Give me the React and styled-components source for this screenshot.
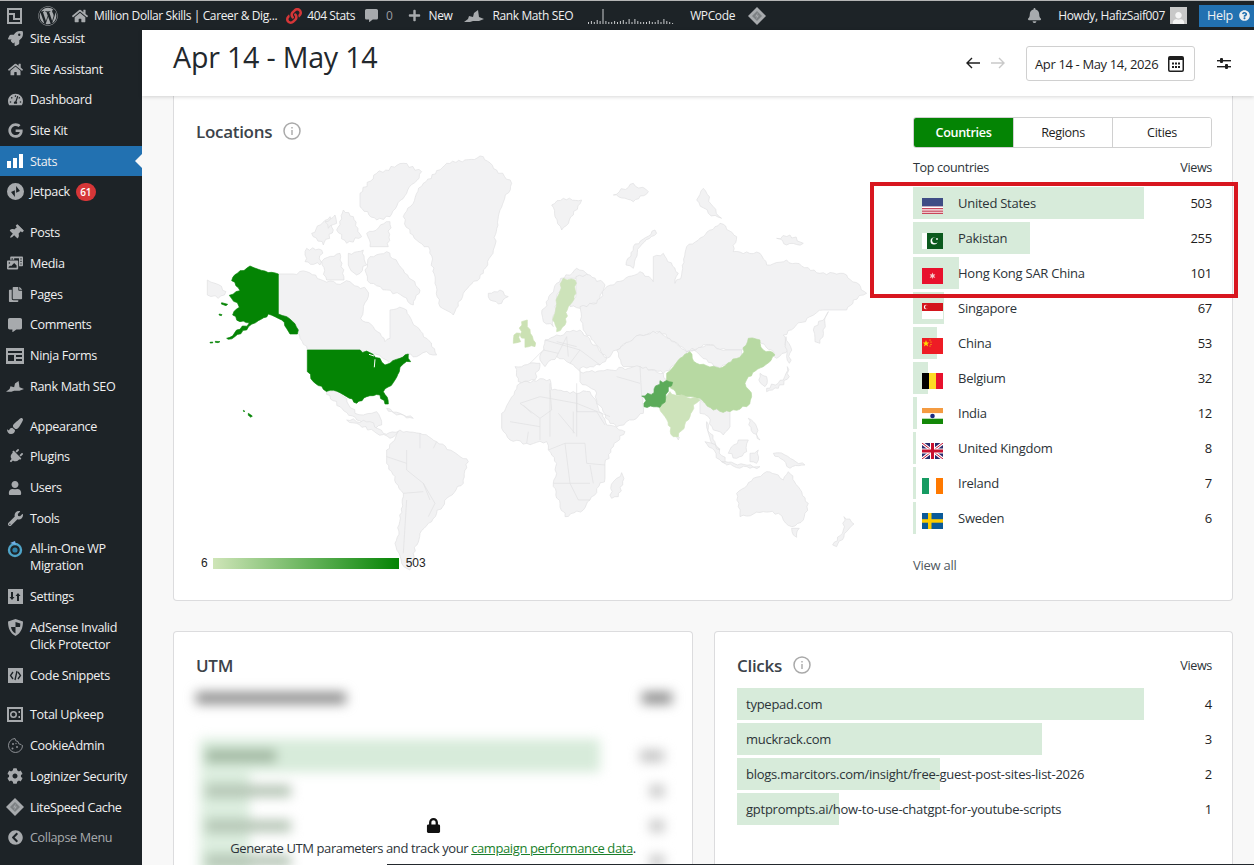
import React from 'react';
import styled, { createGlobalStyle } from 'styled-components';
import {
  FaRocket, FaHome, FaTachometerAlt, FaGoogle, FaThumbtack, FaPhotoVideo, FaCopy, FaCommentAlt,
  FaPaintBrush, FaPlug, FaUser, FaWrench, FaCog, FaLock, FaLink, FaPlus, FaBell,
  FaWordpress, FaChevronCircleLeft, FaQuestionCircle,
} from 'react-icons/fa';

const UI = '"Open Sans", "Noto Sans", sans-serif';
const GREEN = '#048404';
const BAR = '#d7ebda';

const GlobalStyle = createGlobalStyle`
  html, body { margin: 0; padding: 0; height: 100%; overflow: hidden; background: #f8f8f8; }
  body { font-family: ${UI}; font-size: 13px; color: #2c3338; letter-spacing: -0.35px; }
  * { box-sizing: border-box; }
`;

const Page = styled.div`
  position: relative;
  width: 1254px;
  height: 865px;
  overflow: hidden;
  display: flex;
  flex-direction: column;
`;

/* admin bar */
const TopBar = styled.header`
  height: 30px;
  flex: none;
  background: #1d2327;
  border-top: 1px solid #b5b5b5;
  color: #f0f0f1;
  display: flex;
  align-items: center;
  white-space: nowrap;
`;
const BarItem = styled.span`
  display: flex;
  align-items: center;
  margin-left: ${({ $ml }) => $ml || 0}px;
  color: ${({ $muted }) => ($muted ? '#9a9ea2' : 'inherit')};
  font-size: 12px;
  letter-spacing: -0.38px;
  svg { display: block; color: ${({ $tint }) => $tint || '#a7aaad'}; }
`;
const BarSpacer = styled.div`
  flex: 1;
`;
const HelpTab = styled.span`
  margin-left: 12px;
  width: 55px;
  height: 22px;
  background: #2271b1;
  display: flex;
  align-items: center;
  gap: 6px;
  padding-left: 8px;
  font-size: 12.6px;
`;
const Avatar = styled.span`
  width: 17px;
  height: 17px;
  margin-left: 5px;
  background: #c8c8c8;
  display: flex;
  align-items: flex-end;
  justify-content: center;
  overflow: hidden;
  svg { color: #f4f4f4; margin-bottom: -1px; }
`;

const Body = styled.div`
  flex: 1;
  display: flex;
  min-height: 0;
`;

/* side menu */
const Side = styled.nav`
  width: 142px;
  flex: none;
  background: #1d2327;
  overflow: hidden;
`;
const SideList = styled.div`
  margin-top: -7px;
`;
const SideItem = styled.div`
  position: relative;
  display: flex;
  align-items: flex-start;
  padding: 6.85px 0 6.85px 6px;
  margin-top: ${({ $sep }) => ($sep ? '9.3px' : '0')};
  background: ${({ $active }) => ($active ? '#2271b1' : 'transparent')};
  color: ${({ $dim }) => ($dim ? '#a7aaad' : '#f0f0f1')};
  font-size: 12.6px;
  line-height: 17px;
  ${({ $active }) => $active && `
    &::after {
      content: '';
      position: absolute;
      right: 0;
      top: 50%;
      margin-top: -7px;
      border: 7px solid transparent;
      border-right-color: #f8f8f8;
      border-left-width: 0;
    }
  `}
`;
const SideIcon = styled.span`
  width: 18px;
  height: 17px;
  flex: none;
  margin-right: 6px;
  display: flex;
  align-items: center;
  justify-content: center;
  color: ${({ $active }) => ($active ? '#fff' : '#a7aaad')};
`;
const Tilted = styled.span`
  display: flex;
  transform: rotate(45deg);
`;
const Badge = styled.span`
  display: inline-block;
  margin-left: 6px;
  min-width: 20px;
  height: 18px;
  line-height: 18px;
  border-radius: 9px;
  background: #d63638;
  color: #fff;
  font-size: 10px;
  font-weight: 600;
  text-align: center;
  letter-spacing: 0;
`;

const Main = styled.main`
  flex: 1;
  min-width: 0;
  display: flex;
  flex-direction: column;
`;

const DateHeader = styled.div`
  height: 66px;
  flex: none;
  background: #fff;
  box-shadow: 0 1px 4px rgba(0, 0, 0, 0.16);
  position: relative;
  z-index: 2;
  display: flex;
  align-items: center;
  padding: 0 23px 0 31px;
`;
const PageTitle = styled.h1`
  margin: 0 auto 13px 0;
  font-size: 28.6px;
  font-weight: 400;
  letter-spacing: -0.2px;
  color: #23282d;
`;
const DateBox = styled.div`
  width: 169px;
  height: 35px;
  margin: 1px 22px 0 21px;
  border: 1px solid #d0d0d0;
  border-radius: 3px;
  display: flex;
  align-items: center;
  justify-content: space-between;
  padding: 0 10px 0 8px;
  font-size: 13px;
  letter-spacing: -0.36px;
  color: #1e1e1e;
`;
const IconButton = styled.span`
  display: flex;
  margin-left: ${({ $ml }) => $ml || 0}px;
  color: ${({ $off }) => ($off ? '#c9c9c9' : '#1e1e1e')};
`;

const Content = styled.div`
  flex: 1;
  min-height: 0;
  padding: 0 21px 0 31px;
  background: #f8f8f8;
`;
const Card = styled.section`
  background: #fff;
  border: 1px solid #dcdcde;
  border-radius: 4px;
`;
const LocationsCard = styled(Card)`
  height: 505px;
  border-top: 0;
  border-radius: 0 0 4px 4px;
  padding: 20px 20px 0 22px;
  display: grid;
  grid-template-columns: 1fr 299px;
`;
const MapColumn = styled.div`
  min-width: 0;
`;
const CardTitle = styled.h2`
  margin: 0;
  display: flex;
  align-items: center;
  gap: 11px;
  height: 30px;
  font-size: 17px;
  font-weight: 600;
  letter-spacing: -0.3px;
  color: #3c434a;
`;
const MapArea = styled.div`
  position: relative;
  width: 717px;
  height: 420px;
  margin-top: 4px;
  svg { display: block; overflow: visible; }
`;
const Legend = styled.div`
  position: absolute;
  left: 5px;
  top: 406px;
  display: flex;
  align-items: center;
  font-family: "Liberation Sans", Arial, sans-serif;
  font-size: 12px;
  letter-spacing: 0;
  color: #222;
`;
const LegendBar = styled.span`
  width: 186px;
  height: 11px;
  margin: 0 7px 0 5px;
  background: linear-gradient(90deg, #cfe5b8, ${GREEN});
`;

const Tabs = styled.div`
  display: grid;
  grid-template-columns: 99px 99px 99px;
  height: 31px;
  margin-top: 1px;
  border: 1px solid #d0d0d0;
  border-radius: 3px;
  overflow: hidden;
`;
const Tab = styled.span`
  display: flex;
  align-items: center;
  justify-content: center;
  background: ${({ $on }) => ($on ? GREEN : '#fff')};
  color: ${({ $on }) => ($on ? '#fff' : '#1e1e1e')};
  font-weight: ${({ $on }) => ($on ? 600 : 400)};
  font-size: 12.6px;
  & + & { border-left: 1px solid #d0d0d0; }
`;
const ListHead = styled.div`
  display: flex;
  justify-content: space-between;
  align-items: center;
  height: ${({ $tall }) => ($tall ? '30px' : '18px')};
  margin: ${({ $tall }) => ($tall ? '0 0 8px' : '10px 0 10.5px')};
  font-size: 12.6px;
  color: #2c3338;
`;
const Rows = styled.div`
  display: flex;
  flex-direction: column;
  gap: 2.1px;
`;
const Row = styled.div`
  position: relative;
  height: 33px;
  display: flex;
  align-items: center;
  padding-left: 9px;
  font-size: 13px;
  letter-spacing: -0.25px;
  color: #2c3338;
  &::before {
    content: '';
    position: absolute;
    left: 0;
    top: 0;
    bottom: 1px;
    width: ${({ $w }) => $w}px;
    background: ${BAR};
  }
`;
const RowLabel = styled.span`
  position: relative;
  display: flex;
  align-items: center;
  gap: 15px;
  flex: 1;
  margin-top: -1px;
  white-space: nowrap;
  svg { display: block; margin-top: 6px; }
`;
const RowValue = styled.span`
  position: relative;
  margin-top: -1px;
  color: #1e1e1e;
`;
const ViewAll = styled.div`
  margin-top: 22px;
  line-height: 17px;
  font-size: 13px;
  letter-spacing: -0.25px;
  color: #50575e;
`;

const Split = styled.div`
  display: grid;
  grid-template-columns: 520px 519px;
  gap: 21px;
  margin-top: 30px;
`;
const LowerCard = styled(Card)`
  position: relative;
  height: 280px;
  padding: 18px 20px 0 22px;
  border-bottom: 0;
`;
const Blurred = styled.div`
  filter: blur(6px);
  padding-top: 9px;
`;
const GhostHead = styled.div`
  display: flex;
  justify-content: space-between;
  align-items: center;
  height: 18px;
  margin-bottom: 31px;
`;
const Ghost = styled.span`
  display: block;
  width: ${({ $w }) => $w}px;
  height: 12px;
  background: ${({ $c }) => $c || '#8d8d8d'};
`;
const GhostRow = styled.div`
  position: relative;
  display: flex;
  align-items: center;
  justify-content: space-between;
  height: 35px;
  padding: 0 8px 0 10px;
  &::before {
    content: '';
    position: absolute;
    left: 4px;
    top: 1px;
    bottom: 1px;
    width: ${({ $w }) => $w}px;
    background: ${BAR};
  }
  span { position: relative; }
`;
const LockNote = styled.div`
  position: absolute;
  left: 0;
  right: 0;
  top: 186px;
  display: flex;
  flex-direction: column;
  align-items: center;
  gap: 6px;
  font-size: 13px;
  letter-spacing: -0.4px;
  color: #2c3338;
  svg { color: #111; }
  a { color: #1a7f2b; text-decoration: underline; }
`;

const Callout = styled.div`
  position: absolute;
  left: 870px;
  top: 182px;
  width: 368px;
  height: 116px;
  border: 4px solid #d8161f;
  pointer-events: none;
`;
const BottomEdge = styled.div`
  position: absolute;
  left: 387px;
  right: 0;
  bottom: 0;
  height: 1px;
  background: #23282d;
`;

const StatsIcon = () => (
  <svg width="16" height="16" viewBox="0 0 16 16" fill="currentColor">
    <rect x="0" y="8" width="4" height="7" /><rect x="6" y="5" width="4" height="10" /><rect x="12" y="1" width="4" height="14" />
  </svg>
);
const JetpackIcon = () => (
  <svg width="17" height="17" viewBox="0 0 16 16" fill="currentColor">
    <path fillRule="evenodd" d="M8 0a8 8 0 1 1 0 16A8 8 0 0 1 8 0zM8.6 2.8v6.4l3.6-1.6zM7.4 13.2V6.8L3.8 8.4z" />
  </svg>
);
const RankIcon = ({ size = 20 }) => (
  <svg width={size} height={size * 0.7} viewBox="0 0 20 14" fill="currentColor">
    <path d="M0 13l4-3 1-3 4 1 1-4 4-3 1 7 5 2-5 2-6 0-3 1z" />
  </svg>
);
const NinjaIcon = () => (
  <svg width="18" height="16" viewBox="0 0 18 16" fill="currentColor">
    <path fillRule="evenodd" d="M0 0h18v16H0zM2 3v2h14V3zM2 7v6h6V7zM10 7v2h6V7zM10 11v2h6v-2z" />
  </svg>
);
const MigrationIcon = () => (
  <svg width="18" height="18" viewBox="0 0 18 18" fill="none">
    <circle cx="9" cy="10" r="6" stroke="#4fa3c7" strokeWidth="2.4" />
    <circle cx="9" cy="10" r="2.6" fill="#2f7fa6" />
    <path d="M4 3l5-2 1 4z" fill="#72aee6" />
  </svg>
);
const SettingsIcon = () => (
  <svg width="15" height="15" viewBox="0 0 15 15" fill="currentColor">
    <path fillRule="evenodd" d="M0 0h15v15H0zM3 3v5H1.500L4 11l2.500-3H5V3zM11 12V7h1.500L10 4 7.500 7H9v5z" />
  </svg>
);
const ShieldIcon = () => (
  <svg width="15" height="17" viewBox="0 0 15 17" fill="currentColor">
    <path fillRule="evenodd" d="M7.500 0L15 2.500C15 9 13 14 7.500 17 2 14 0 9 0 2.500zM7.500 3v5H3c.3 3 1.800 5 4.500 6.500V8H12c.2-1 .3-2 .3-3.500z" />
  </svg>
);
const CodeIcon = () => (
  <svg width="15" height="15" viewBox="0 0 15 15">
    <rect width="15" height="15" fill="#a7aaad" />
    <path d="M5 4L2.500 7.500 5 11M7 12l2-9M10 4l2.500 3.500L10 11" stroke="#1d2327" strokeWidth="1.300" fill="none" />
  </svg>
);
const UpkeepIcon = () => (
  <svg width="16" height="15" viewBox="0 0 16 15" fill="currentColor">
    <path fillRule="evenodd" d="M0 0h16v15H0zM2 2v11h12V2zM6.500 4a3.500 3.500 0 1 1 0 7 3.500 3.500 0 0 1 0-7zM6.500 5.500a2 2 0 1 0 0 4 2 2 0 0 0 0-4zM11.500 4h1.500v2h-1.500zM11.500 9h1.500v2h-1.500z" />
  </svg>
);
const CookieIcon = () => (
  <svg width="17" height="17" viewBox="0 0 17 17" fill="none" stroke="#8c8f94" strokeWidth="1">
    <path d="M8 1.500a3 3 0 0 0 3 3 3 3 0 0 0 3 3 2 2 0 0 0 1.500 1A7 7 0 1 1 8 1.500z" />
    <g fill="#8c8f94" stroke="none">
      <circle cx="6" cy="7" r="1" /><circle cx="10" cy="10" r="1" /><circle cx="5.500" cy="11.500" r="1" /><circle cx="9" cy="6.500" r=".7" />
    </g>
  </svg>
);
const DiamondIcon = ({ size = 18 }) => (
  <svg width={size} height={size} viewBox="0 0 18 18">
    <path d="M9 0l9 9-9 9-9-9z" fill="#a7aaad" />
    <path d="M9 4l5 5-5 5-5-5z" fill="#7d8184" />
    <path d="M10 5.500L7 9.500h2l-1 3 3-4H9z" fill="#a7aaad" />
  </svg>
);
const ScreenIcon = () => (
  <svg width="15" height="16" viewBox="0 0 15 16" fill="none" stroke="#a7aaad" strokeWidth="2">
    <path d="M1 1h13v14H1zM1 6h6v5h7" />
  </svg>
);
const InfoIcon = () => (
  <svg width="18" height="18" viewBox="0 0 18 18" fill="none">
    <circle cx="9" cy="9" r="8" stroke="#a9a9a9" strokeWidth="1.500" />
    <rect x="8.300" y="8" width="1.400" height="5" fill="#a9a9a9" />
    <rect x="8.300" y="5" width="1.400" height="1.500" fill="#a9a9a9" />
  </svg>
);
const ArrowLeft = () => (
  <svg width="14" height="12" viewBox="0 0 14 12" fill="none" stroke="currentColor" strokeWidth="1.400">
    <path d="M14 6H1M6 1L1 6l5 5" />
  </svg>
);
const ArrowRight = () => (
  <svg width="14" height="12" viewBox="0 0 14 12" fill="none" stroke="currentColor" strokeWidth="1.400">
    <path d="M0 6h13M8 1l5 5-5 5" />
  </svg>
);
const SlidersIcon = () => (
  <svg width="14" height="13" viewBox="0 0 14 13" fill="#1e1e1e">
    <rect y="3" width="14" height="1.400" /><rect y="9" width="14" height="1.400" />
    <rect x="3" y="1" width="3" height="5" rx="1" /><rect x="8" y="7" width="3" height="5" rx="1" />
  </svg>
);
const CalendarIcon = () => (
  <svg width="16" height="16" viewBox="0 0 16 16" fill="#1e1e1e">
    <path fillRule="evenodd" d="M2 0h12a2 2 0 0 1 2 2v12a2 2 0 0 1-2 2H2a2 2 0 0 1-2-2V2a2 2 0 0 1 2-2zM1.500 4v10c0 .3.200.5.500.5h12c.3 0 .5-.2.500-.5V4z" />
    {[4, 7, 10].map((x) => <rect key={x} x={x} y="6.500" width="2" height="2" />)}
    {[4, 7, 10].map((x) => <rect key={x} x={x} y="10" width="2" height="2" />)}
  </svg>
);
const Sparkline = () => {
  const heights = [2, 3, 2, 4, 3, 15, 3, 2, 2, 3, 2, 3, 4, 2, 5, 2, 5, 3, 2, 2, 2, 3, 2, 2, 4, 2, 5, 3, 2, 1];
  return (
    <svg width="87" height="16" viewBox="0 0 87 16" fill="#c9cbcd">
      {heights.map((h, i) => <rect key={i} x={i * 2.9} y={16 - h} width="1" height={h} />)}
    </svg>
  );
};

// flags, 21x16
const Flag = ({ children }) => <svg width="21" height="16" viewBox="0 0 21 16">{children}</svg>;
const flags = {
  us: <Flag><rect width="21" height="16" fill="#fff" />{[0, 2.500, 5, 7.500, 10, 12.500, 14.700].map((y) => <rect key={y} y={y} width="21" height="1.300" fill="#c8475a" />)}<rect width="21" height="8.500" fill="#3f4d85" /><rect y="8.500" width="21" height="1" fill="#fff" /></Flag>,
  pk: <Flag><rect width="21" height="16" fill="#fff" /><rect x="5" width="16" height="16" fill="#0b5a1e" /><circle cx="12" cy="8" r="3.500" fill="#fff" /><circle cx="13.200" cy="7.200" r="3" fill="#0b5a1e" /><circle cx="15" cy="6" r=".9" fill="#fff" /></Flag>,
  hk: <Flag><rect width="21" height="16" fill="#e8112d" /><path d="M10.500 4.500l.8 2 2-.3-1.200 1.700 1.200 2-2.200-.6-.6 2-.6-2-2.200.6 1.200-2-1.200-1.700 2 .3z" fill="#f7c9cc" /></Flag>,
  sg: <Flag><rect width="21" height="16" fill="#fff" /><rect width="21" height="8" fill="#d3151c" /><circle cx="4" cy="4" r="2.200" fill="#fff" /><circle cx="5" cy="4" r="2" fill="#d3151c" /></Flag>,
  cn: <Flag><rect width="21" height="16" fill="#ee1c25" /><path d="M4 2l.9 2.400 2.400.1-1.900 1.500.7 2.400L4 7 1.900 8.400l.7-2.400L.7 4.500l2.400-.1z" fill="#ffde00" /><circle cx="8" cy="2" r=".6" fill="#ffde00" /><circle cx="9" cy="4" r=".6" fill="#ffde00" /><circle cx="9" cy="6.500" r=".6" fill="#ffde00" /><circle cx="8" cy="8" r=".6" fill="#ffde00" /></Flag>,
  be: <Flag><rect width="7" height="16" fill="#000" /><rect x="7" width="7" height="16" fill="#fdda24" /><rect x="14" width="7" height="16" fill="#e8112d" /></Flag>,
  in: <Flag><rect width="21" height="5.300" fill="#f49b41" /><rect y="5.300" width="21" height="5.400" fill="#fff" /><rect y="10.700" width="21" height="5.300" fill="#138808" /><circle cx="10.500" cy="8" r="2.300" fill="#1a2a80" /></Flag>,
  gb: <Flag><rect width="21" height="16" fill="#2b2a6b" /><path d="M0 0l21 16M21 0L0 16" stroke="#fff" strokeWidth="3" /><path d="M0 0l21 16M21 0L0 16" stroke="#c8102e" strokeWidth="1" /><path d="M10.500 0v16M0 8h21" stroke="#fff" strokeWidth="5" /><path d="M10.500 0v16M0 8h21" stroke="#c8102e" strokeWidth="3" /></Flag>,
  ie: <Flag><rect width="7" height="16" fill="#169b62" /><rect x="7" width="7" height="16" fill="#fff" /><rect x="14" width="7" height="16" fill="#ff7900" /></Flag>,
  se: <Flag><rect width="21" height="16" fill="#0b5a99" /><rect x="6" width="3.500" height="16" fill="#fecc00" /><rect y="6.200" width="21" height="3.500" fill="#fecc00" /></Flag>,
};

const countries = [
  ['us', 'United States', 503, 231], ['pk', 'Pakistan', 255, 117], ['hk', 'Hong Kong SAR China', 101, 46],
  ['sg', 'Singapore', 67, 31], ['cn', 'China', 53, 24], ['be', 'Belgium', 32, 15], ['in', 'India', 12, 4],
  ['gb', 'United Kingdom', 8, 3], ['ie', 'Ireland', 7, 3], ['se', 'Sweden', 6, 3],
];
const clicks = [
  ['typepad.com', 4, 407], ['muckrack.com', 3, 305],
  ['blogs.marcitors.com/insight/free-guest-post-sites-list-2026', 2, 203],
  ['gptprompts.ai/how-to-use-chatgpt-for-youtube-scripts', 1, 102],
];

const menu = [
  ['Site Assist', <FaRocket size={15} />], ['Site Assistant', <FaHome size={15} />],
  ['Dashboard', <FaTachometerAlt size={15} />], ['Site Kit', <FaGoogle size={15} />],
  ['Stats', <StatsIcon />, { active: true }], ['Jetpack', <JetpackIcon />, { badge: 61 }],
  ['Posts', <Tilted><FaThumbtack size={15} /></Tilted>, { sep: true }], ['Media', <FaPhotoVideo size={16} />],
  ['Pages', <FaCopy size={15} />], ['Comments', <FaCommentAlt size={14} />], ['Ninja Forms', <NinjaIcon />],
  ['Rank Math SEO', <RankIcon size={18} />], ['Appearance', <FaPaintBrush size={16} />, { sep: true }],
  ['Plugins', <Tilted><FaPlug size={15} /></Tilted>], ['Users', <FaUser size={14} />], ['Tools', <FaWrench size={15} />],
  [<>All-in-One WP<br />Migration</>, <MigrationIcon />], ['Settings', <SettingsIcon />],
  [<>AdSense Invalid<br />Click Protector</>, <ShieldIcon />], ['Code Snippets', <CodeIcon />],
  ['Total Upkeep', <UpkeepIcon />, { sep: true }], ['CookieAdmin', <CookieIcon />],
  ['Loginizer Security', <FaCog size={16} />], ['LiteSpeed Cache', <DiamondIcon />],
  ['Collapse Menu', <FaChevronCircleLeft size={15} />, { dim: true }],
];

// map shapes, each group uses the pixel frame of one part of the map
const LAND = '#f2f2f3';
const west = [
  [LAND, 'M52 390L75 400 108 425 85 445 52 435Z'],
  [LAND, 'M265 372L310 372 350 365 400 392 440 402 480 395 530 420 535 440 520 480 512 505 550 530 585 575 600 565 600 480 640 475 680 530 710 565 725 590 740 615 710 605 680 620 662 612 640 620 600 640 578 625 555 612 510 600 352 600 330 565 300 510 265 492Z'],
  [LAND, 'M540 320L590 305 640 360 690 420 670 465 640 440 590 420 540 400 525 360Z'],
  [LAND, 'M350 295L395 300 390 345 345 335Z'], [LAND, 'M395 335L450 310 462 390 410 390Z'],
  [LAND, 'M475 310L520 300 530 345 500 375 475 345Z'], [LAND, 'M510 130L560 70 640 40 695 65 650 130 600 200 560 210 510 170Z'],
  [LAND, 'M530 250L600 215 595 290 540 290Z'], [LAND, 'M365 250L420 200 430 240 400 285Z'],
  [LAND, 'M460 180L490 200 515 260 470 280 440 240Z'], [LAND, 'M405 215L435 195 440 220 415 235Z'],
  [LAND, 'M640 200L700 100 770 40 880 20 920 60 965 100 930 180 910 300 880 370 820 430 790 495 750 470 735 400 720 300 660 250Z'],
  [LAND, 'M895 430L930 420 955 440 925 462 900 450Z'],
  [LAND, 'M400 718L450 728 470 745 495 790 520 795 545 790 560 785 575 825 540 835 500 810 450 770Z'],
  [LAND, 'M590 775L640 795 670 805 620 795Z'],
  ['#cbe1b3', 'M995 515L1012 510 1012 530 1030 570 1035 590 1005 592 1005 565 990 555Z'],
  ['#cbe1b3', 'M972 555L990 550 992 575 970 580Z'],
  [GREEN, 'M180 348L205 358 265 372 265 492 290 500 325 540 322 552 300 552 275 510 235 492 205 512 170 540 115 568 110 565 150 538 178 518 150 515 128 495 148 472 142 458 118 436 150 422 125 392 150 362Z'],
  [GREEN, 'M95 458l18 5-5 4-14-5Z'], [GREEN, 'M88 492l8 2-2 3-7-2Z'], [GREEN, 'M60 577l8-1v3h-8Z'], [GREEN, 'M76 574l14 1-6 3-8-1Z'],
  [GREEN, 'M160 781l4 2-2 3Z'], [GREEN, 'M175 790l12 8-4 4-8-6Z'],
  [GREEN, 'M352 600L510 600 548 612 570 625 585 645 600 640 630 625 655 612 662 635 640 642 628 665 615 690 580 725 595 762 585 762 570 735 530 740 500 760 470 740 450 728 400 718 370 695 352 665Z'],
];
const east = [
  [LAND, 'M155 165L190 145 245 150 220 195 185 240 165 200Z'], [LAND, 'M340 135L400 100 445 125 400 155Z'],
  [LAND, 'M378 345L400 290 465 240 470 250 420 290 400 355Z'], [LAND, 'M590 150L610 115 640 170 665 205 625 190Z'],
  [LAND, 'M830 265L870 255 910 280 860 285Z'],
  [LAND, 'M125 490L170 400 230 355 265 375 225 385 190 385 165 470 160 530 130 515Z'],
  [LAND, 'M228 380L270 375 315 405 290 460 240 475 210 470 228 430Z'],
  [LAND, 'M240 470L290 460 320 410 350 395 420 365 460 395 460 320 490 310 535 370 525 400 545 375 560 290 610 260 660 220 710 260 700 305 780 310 800 345 860 330 960 370 1040 375 1100 430 1060 450 1040 480 970 480 930 500 850 555 865 600 830 625 815 600 760 565 725 600 680 600 620 585 560 605 480 545 420 555 350 600 320 625 250 540Z'],
  [LAND, 'M940 540L985 485 975 520 960 580 945 575Z'], [LAND, 'M858 560L872 590 868 640 860 620Z'],
  [LAND, 'M350 600L420 555 480 545 560 605 530 640 490 670 420 650 370 650Z'],
  [LAND, 'M560 605L620 585 680 600 725 600 725 620 660 655 580 600Z'],
  [LAND, 'M240 665L330 660 420 650 490 670 500 690 465 730 425 738 430 790 400 810 350 830 330 820 290 750 285 720 240 695Z'],
  [LAND, 'M120 630L135 570 170 555 240 540 320 625 300 645 240 655 240 665 210 640 170 620 135 650Z'],
  [LAND, 'M45 650L120 640 105 690 55 695Z'],
  [LAND, 'M600 745L640 780 690 785 690 830 670 855 640 840 625 800 600 790Z'],
  [LAND, 'M800 715L850 690 862 650 868 680 835 715 800 725Z'], [LAND, 'M780 670L800 680 795 710 782 700Z'],
  ['#cde3ba', 'M190 385L225 390 228 430 205 470 195 525 170 545 158 510 168 450Z'],
  ['#b7d9a2', 'M500 670L540 625 570 605 590 640 660 655 725 615 745 565 780 570 790 600 825 615 790 650 745 680 735 700 755 740 740 770 690 785 640 780 600 745 530 735 500 700Z'],
  ['#cde3ba', 'M495 745L510 725 525 735 600 750 580 765 570 800 535 860 520 860 495 800 478 772Z'],
  ['#5cab5a', 'M425 738L462 728 480 692 518 697 505 712 497 745 480 772 432 770 438 752Z'],
];
const south = [
  [LAND, 'M35 190L60 150 90 100 130 92 180 88 185 120 240 130 300 125 325 175 350 225 405 245 370 290 345 340 345 385 300 450 280 480 225 500 210 460 190 400 200 340 175 300 170 275 110 280 60 270 35 235Z'],
  [LAND, 'M395 368L398 395 385 440 365 445 362 415 380 385Z'],
  [LAND, 'M740 430L790 385 830 365 865 375 880 390 895 365 925 410 955 460 940 510 905 530 880 510 865 490 820 485 750 500Z'],
  [LAND, 'M905 535L928 535 920 562 910 555Z'], [LAND, 'M1062 500L1092 522 1070 545 1040 590 1028 585 1060 540Z'],
  [LAND, 'M850 310L885 315 945 345 900 355 880 330Z'], [LAND, 'M715 310L745 270 775 270 770 305 740 325Z'],
  [LAND, 'M645 275L680 290 715 340 695 335Z'], [LAND, 'M695 335L810 350 780 355 710 345Z'],
  [LAND, 'M780 310L805 300 800 340 780 335Z'], [LAND, 'M775 205L790 215 810 270 790 250Z'],
  [LAND, 'M650 215L660 250 690 300 665 280Z'], [LAND, 'M558 258L568 262 565 270Z'],
];
const america = [
  [LAND, 'M630 30L690 40 740 65 790 95 835 125 820 190 770 235 740 280 715 310 690 340 670 400 660 450 635 430 618 380 640 220 590 130 590 90Z'],
  [LAND, 'M470 0L540 5 580 40 625 35 600 55 560 40 500 10Z'],
];
const borders = {
  south: 'M90 160L150 205 185 180 180 120M150 205V270M205 190L255 250M260 130V185L320 185M250 185V250M320 185L345 225M175 300L225 280 285 280M225 280L240 400M190 400H240L265 450M285 280L290 340 345 345M240 400L300 400M60 215L150 230M110 280L115 245M100 165L125 190M300 345L310 400M265 450L300 450',
  america: 'M650 90L650 150 700 190 720 240M640 220L700 215M590 110L650 130M690 40L690 85M650 240L640 400M740 65L730 85M700 190L735 250 715 290',
  east: 'M135 570L240 600M170 620L200 560M240 600L300 645M240 600L210 640M90 640L130 600M60 760L120 740 230 760 330 800M150 700L150 860M230 700L230 860M420 650L425 738M350 680L420 700M170 575L230 590M200 560L205 620M130 600L175 610',
};
const lakes = 'M537 613L552 618M555 628L553 652';

// breaks long slanted edges into a small jagged coast, straight borders stay straight
const roughen = (d) => {
  if (/[a-y]/.test(d)) return d;
  const nums = d.match(/\d+/g).map(Number);
  const pts = [];
  for (let i = 0; i < nums.length; i += 2) pts.push([nums[i], nums[i + 1]]);
  let seed = nums[0] * 7 + nums[1] * 13 + 1;
  const rand = () => {
    seed = (seed * 1103 + 12345) % 65536;
    return seed / 65536 - 0.5;
  };
  const out = [];
  pts.forEach(([x, y], i) => {
    const [nx, ny] = pts[(i + 1) % pts.length];
    out.push(`${x} ${y}`);
    const dx = nx - x;
    const dy = ny - y;
    if (!dx || !dy) return;
    const len = Math.hypot(dx, dy);
    const steps = Math.floor(len / 9);
    for (let s = 1; s < steps; s++) {
      const t = s / steps;
      const off = rand() * 10;
      out.push(`${(x + dx * t - (dy / len) * off).toFixed(1)} ${(y + dy * t + (dx / len) * off).toFixed(1)}`);
    }
  });
  return `M${out.join('L')}Z`;
};

const MapShapes = ({ shapes, x, y, lines, cuts }) => (
  <g transform={`translate(${x} ${y}) scale(0.3333)`}>
    {shapes.map(([fill, d], i) => (
      <path key={i} d={roughen(d)} fill={fill} stroke={fill === LAND ? '#dfe0e1' : fill} strokeWidth="2" strokeLinejoin="round" />
    ))}
    {lines && <path d={lines} fill="none" stroke="#dfe0e1" strokeWidth="2" />}
    {cuts && <path d={cuts} fill="none" stroke="#fff" strokeWidth="3" />}
  </g>
);

const WorldMap = () => (
  <svg width="717" height="420" viewBox="196 150 717 420">
    <MapShapes shapes={west} x={190} y={150} cuts={lakes} />
    <MapShapes shapes={america} x={190} y={420} lines={borders.america} />
    <MapShapes shapes={south} x={490} y={350} lines={borders.south} />
    <MapShapes shapes={east} x={500} y={150} lines={borders.east} />
  </svg>
);

const SideMenu = () => (
  <Side>
    <SideList>
      {menu.map(([label, icon, opts = {}], i) => (
        <SideItem key={i} $active={opts.active} $sep={opts.sep} $dim={opts.dim}>
          <SideIcon $active={opts.active}>{icon}</SideIcon>
          <span>{label}{opts.badge && <Badge>{opts.badge}</Badge>}</span>
        </SideItem>
      ))}
    </SideList>
  </Side>
);

const AdminBar = () => (
  <TopBar>
    <BarItem $ml={7}><ScreenIcon /></BarItem>
    <BarItem $ml={16}><FaWordpress size={20} /></BarItem>
    <BarItem $ml={14}><FaHome size={16} /></BarItem>
    <BarItem $ml={6}>Million Dollar Skills | Career &amp; Dig...</BarItem>
    <BarItem $ml={9} $tint="#d63638"><FaLink size={16} /></BarItem>
    <BarItem $ml={5}>404 Stats</BarItem>
    <BarItem $ml={10}><FaCommentAlt size={13} /></BarItem>
    <BarItem $ml={8} $muted>0</BarItem>
    <BarItem $ml={16}><FaPlus size={13} /></BarItem>
    <BarItem $ml={7}>New</BarItem>
    <BarItem $ml={12}><RankIcon /></BarItem>
    <BarItem $ml={8}>Rank Math SEO</BarItem>
    <BarItem $ml={15}><Sparkline /></BarItem>
    <BarItem $ml={15}>WPCode</BarItem>
    <BarItem $ml={13}><DiamondIcon /></BarItem>
    <BarSpacer />
    <BarItem><FaBell size={15} /></BarItem>
    <BarItem $ml={16}>Howdy, HafizSaif007</BarItem>
    <Avatar><FaUser size={13} /></Avatar>
    <HelpTab>Help <FaQuestionCircle size={11} /></HelpTab>
  </TopBar>
);

const Locations = () => (
  <LocationsCard>
    <MapColumn>
      <CardTitle>Locations <InfoIcon /></CardTitle>
      <MapArea>
        <WorldMap />
        <Legend>6<LegendBar />503</Legend>
      </MapArea>
    </MapColumn>
    <div>
      <Tabs>
        <Tab $on>Countries</Tab>
        <Tab>Regions</Tab>
        <Tab>Cities</Tab>
      </Tabs>
      <ListHead><span>Top countries</span><span>Views</span></ListHead>
      <Rows>
        {countries.map(([code, name, views, w]) => (
          <Row key={code} $w={w}>
            <RowLabel>{flags[code]}{name}</RowLabel>
            <RowValue>{views}</RowValue>
          </Row>
        ))}
      </Rows>
      <ViewAll>View all</ViewAll>
    </div>
  </LocationsCard>
);

const ghostRows = [[400, 70, 24], [50, 85, 14], [50, 85, 14], [50, 85, 14]];

const Utm = () => (
  <LowerCard>
    <CardTitle>UTM</CardTitle>
    <Blurred>
      <GhostHead><Ghost $w={150} /><Ghost $w={30} /></GhostHead>
      {ghostRows.map(([w, label, value], i) => (
        <GhostRow key={i} $w={w}>
          <Ghost $w={label} $c={i ? '#b4c4b4' : '#9fb59f'} />
          <Ghost $w={value} $c="#c4c4c4" />
        </GhostRow>
      ))}
    </Blurred>
    <LockNote>
      <FaLock size={15} />
      <span>Generate UTM parameters and track your <a href="#utm">campaign performance data</a>.</span>
    </LockNote>
  </LowerCard>
);

const Clicks = () => (
  <LowerCard>
    <ListHead $tall>
      <CardTitle>Clicks <InfoIcon /></CardTitle>
      <span>Views</span>
    </ListHead>
    <Rows>
      {clicks.map(([url, views, w]) => (
        <Row key={url} $w={w}>
          <RowLabel>{url}</RowLabel>
          <RowValue>{views}</RowValue>
        </Row>
      ))}
    </Rows>
  </LowerCard>
);

export default function App() {
  return (
    <Page>
      <GlobalStyle />
      <AdminBar />
      <Body>
        <SideMenu />
        <Main>
          <DateHeader>
            <PageTitle>Apr 14 - May 14</PageTitle>
            <IconButton><ArrowLeft /></IconButton>
            <IconButton $off $ml={11}><ArrowRight /></IconButton>
            <DateBox>Apr 14 - May 14, 2026 <CalendarIcon /></DateBox>
            <IconButton><SlidersIcon /></IconButton>
          </DateHeader>
          <Content>
            <Locations />
            <Split>
              <Utm />
              <Clicks />
            </Split>
          </Content>
        </Main>
      </Body>
      <Callout />
      <BottomEdge />
    </Page>
  );
}
